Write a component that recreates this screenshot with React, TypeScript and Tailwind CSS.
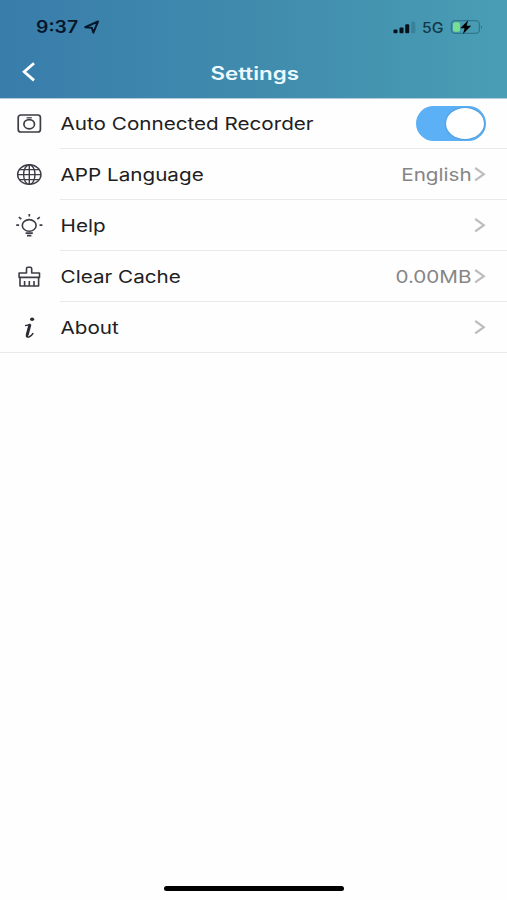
import type { ReactNode } from "react";

interface SettingRowProps {
	icon: ReactNode;
	label: string;
	value?: string;
	last?: boolean;
	children?: ReactNode;
}

const iconClass = "h-7 w-8 shrink-0 fill-none stroke-[#3d3d45]";

const RecorderIcon = () => (
	<svg viewBox="0 0 32 28" className={iconClass} strokeWidth="1.7">
		<rect x="5.2" y="6" width="22.2" height="17" rx="2.6" />
		<ellipse cx="16.2" cy="15.2" rx="5.3" ry="4.6" />
		<path d="M13.6 8.8h5.2" strokeWidth="1.2" />
	</svg>
);

const GlobeIcon = () => (
	<svg viewBox="0 0 32 28" className={iconClass} strokeWidth="1.4">
		<ellipse cx="16.3" cy="14.6" rx="11.7" ry="9.8" />
		<ellipse cx="16.3" cy="14.6" rx="5.7" ry="9.8" />
		<path d="M16.3 4.8v19.6M4.6 14.6h23.4M6.4 9.6h19.8M6.4 19.6h19.8" />
	</svg>
);

const HelpIcon = () => (
	<svg viewBox="0 0 32 28" className={iconClass} strokeWidth="1.6">
		<ellipse cx="16.2" cy="14.4" rx="6.9" ry="5.8" />
		<path d="M12.6 22.1h7.2M14 24.6h4.4" strokeWidth="1.6" />
		<path d="M16.3 3v2.6M5.8 6.2l2.5 2M26.8 6.2l-2.5 2M3.2 14.2h2.9M26.5 14.2h2.9" strokeWidth="1.7" />
	</svg>
);

const BrushIcon = () => (
	<svg viewBox="0 0 32 28" className={iconClass} strokeWidth="1.6" strokeLinejoin="round">
		<path d="M6.1 15.4v-4.4h7.4V6.7q0-1.4 1.4-1.4h2.4q1.4 0 1.4 1.4v4.3h7.8v4.4z" />
		<path d="M7 15.4v8.6h18.6v-8.6M11.6 19v4.6M16.3 19v4.6M21 19v4.6" />
	</svg>
);

const AboutIcon = () => (
	<svg viewBox="0 0 32 28" className="h-7 w-8 shrink-0 fill-none stroke-[#2b2b35]">
		<ellipse cx="19.1" cy="6.3" rx="2.1" ry="1.8" className="fill-[#2b2b35] stroke-none" />
		<path d="M12 12.6q3-.2 5.4-1.5" strokeWidth="1.4" />
		<path d="M16.8 11.6l-2.7 9.6q-.5 3.4 1.8 2.8 2.5-.7 4.3-3.8" strokeWidth="1.5" />
		<path d="M17 11.4l-2.8 10.4q-.3 1.3.5 1.8" strokeWidth="2.9" />
	</svg>
);

const Chevron = () => (
	<svg viewBox="0 0 12 16" className="h-4 w-3 shrink-0 fill-none stroke-[#bdbdbd]" strokeWidth="2.2">
		<path d="M1.2 2l8.6 6.2-8.6 6.2" />
	</svg>
);

const StatusBar = () => (
	<div className="flex h-[54px] items-center pl-9 pr-[23px] text-[#07172b]">
		<span className="w-[43px] origin-left scale-x-[1.14] whitespace-nowrap pt-px text-[17px] font-semibold leading-none">9:37</span>
		<svg viewBox="0 0 16 14" className="ml-[5px] h-[14px] w-4 fill-none stroke-current" strokeWidth="2" strokeLinejoin="round">
			<path d="M1.2 7.2L14 1.5 9.4 12.6 7.8 7.8z" />
		</svg>
		<div className="ml-auto flex items-center">
			<svg viewBox="0 0 23 13" className="h-[13px] w-[23px] fill-[#07111c]">
				<rect x="0.5" y="8.4" width="4" height="3.8" rx="1" />
				<rect x="6.5" y="6.4" width="4" height="5.8" rx="1" />
				<rect x="12.2" y="3.2" width="4" height="9" rx="1" />
				<rect x="18.3" y="0.8" width="4" height="11.4" rx="1" className="fill-[#378298]" />
			</svg>
			<span className="ml-[6px] w-[22px] origin-left scale-x-[1.12] whitespace-nowrap pt-[2px] text-[14px] font-medium leading-none text-[#123747]">5G</span>
			<svg viewBox="0 0 34 16" className="ml-[6px] h-4 w-[34px]">
				<rect x="1.4" y="1.6" width="28" height="12.8" rx="3.6" className="fill-none stroke-[#30788c]" strokeWidth="1.3" />
				<path d="M31.2 6.2q1.8 1.9 0 3.9z" className="fill-[#245d70]" />
				<rect x="3" y="3.2" width="7" height="9.6" rx="2" className="fill-[#78df91]" />
				<path d="M18.2 1.2L10.2 9.2h4.4l-1.6 5.8 8.2-8.2h-4.6z" className="fill-black" />
			</svg>
		</div>
	</div>
);

const TheHeader = () => (
	<header className="h-[98px] shrink-0 bg-linear-to-r from-[#397dab] via-[#408bad] to-[#499eb4] shadow-[0_1px_0_#b3cbdd]">
		<StatusBar />
		<div className="flex h-[36px] items-center pl-[22px] pr-[34px]">
			<button type="button" aria-label="Back">
				<svg viewBox="0 0 14 20" className="h-5 w-[14px] fill-none stroke-white" strokeWidth="2.8">
					<path d="M12 1.2L2.2 9.8l9.8 8.6" />
				</svg>
			</button>
			<h1 className="grow pt-[4px] text-center text-[18px] font-semibold leading-none text-[#edf9ff]">
				<span className="inline-block scale-x-[1.24]">Settings</span>
			</h1>
		</div>
	</header>
);

const SettingRow = ({ icon, label, value, last, children }: SettingRowProps) => (
	<li className={last ? "flex h-[51px] border-b border-[#e9e9e9] pl-[13px]" : "flex h-[51px] pl-[13px]"}>
		<div className="flex h-[50px] w-[47px] shrink-0 items-center">{icon}</div>
		<div className={last ? "flex grow items-center pr-[21px]" : "flex grow items-center border-b border-[#e9e9e9] pr-[21px]"}>
			<span className="origin-left scale-x-[1.18] whitespace-nowrap pl-[0.5px] pt-[2px] text-[17.5px] leading-none text-[#202022]">{label}</span>
			<div className="ml-auto flex items-center">
				{value && (
					<span className="mr-[2px] origin-right scale-x-[1.18] whitespace-nowrap pt-[2px] text-[17.5px] leading-none text-[#858585]">
						{value}
					</span>
				)}
				{children ?? <Chevron />}
			</div>
		</div>
	</li>
);

const Toggle = () => (
	<button
		type="button"
		role="switch"
		aria-checked="true"
		aria-label="Auto Connected Recorder"
		className="mt-px flex h-[35px] w-[70px] items-center justify-end rounded-full bg-[#5cb0f5] pr-[2px]"
	>
		<span className="h-[31px] w-[38px] rounded-[50%] bg-white shadow-[0_0_2px_#397caf]" />
	</button>
);

const App = () => {
	return (
		<div className="flex h-[900px] w-[507px] flex-col overflow-hidden bg-[#fefefe] font-[Inter,sans-serif]">
			<TheHeader />
			<ul>
				<SettingRow icon={<RecorderIcon />} label="Auto Connected Recorder">
					<Toggle />
				</SettingRow>
				<SettingRow icon={<GlobeIcon />} label="APP Language" value="English" />
				<SettingRow icon={<HelpIcon />} label="Help" />
				<SettingRow icon={<BrushIcon />} label="Clear Cache" value="0.00MB" />
				<SettingRow icon={<AboutIcon />} label="About" last />
			</ul>
			<div className="mb-[9px] ml-[164px] mt-auto h-[5px] w-[180px] rounded-full bg-black" />
		</div>
	);
};

export default App;
